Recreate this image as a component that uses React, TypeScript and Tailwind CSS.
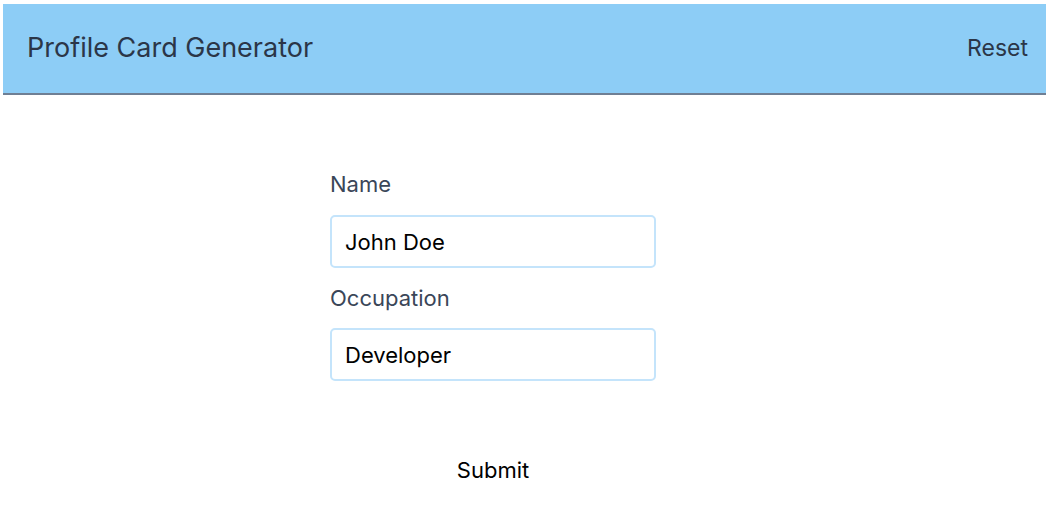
import React, { useState } from 'react';

const font = { fontFamily: 'Inter, "Noto Sans", sans-serif' };

export default function App() {
  const [name, setName] = useState('John Doe');
  const [occupation, setOccupation] = useState('Developer');

  return (
    <div className="min-h-[507px] w-full bg-white pl-[3px] pt-[4px]" style={font}>
      <header className="flex h-[91px] items-center justify-between border-b-2 border-[#6f7f94] bg-[#8dcdf6] pl-[24px] pr-[18px]">
        <h1 className="text-[27px] font-normal text-[#2b3648]">Profile Card Generator</h1>
        <button className="text-[23px] text-[#2b3648]">Reset</button>
      </header>

      <form className="ml-[327px] mt-[74px] flex w-[326px] flex-col" onSubmit={(e) => e.preventDefault()}>
        <label className="text-[22px] leading-[30px] text-[#3a4658]">Name</label>
        <input
          value={name}
          onChange={(e) => setName(e.target.value)}
          className="mt-[16px] h-[53px] rounded-[5px] border-2 border-[#c4e4fb] px-[13px] text-[22px] text-black outline-none"
        />
        <label className="mt-[15px] text-[22px] leading-[30px] text-[#3a4658]">Occupation</label>
        <input
          value={occupation}
          onChange={(e) => setOccupation(e.target.value)}
          className="mt-[15px] h-[53px] rounded-[5px] border-2 border-[#c4e4fb] px-[13px] text-[22px] text-black outline-none"
        />
        <button type="submit" className="mt-[75px] self-center text-[22px] leading-[28px] text-black">
          Submit
        </button>
      </form>
    </div>
  );
}
